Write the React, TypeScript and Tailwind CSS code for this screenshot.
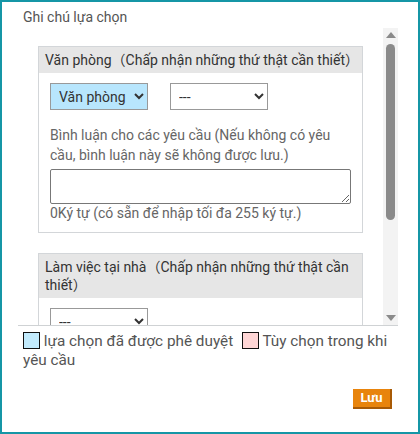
import React from "react";

const comment =
  "Bình luận cho các yêu cầu (Nếu không có yêu cầu, bình luận này sẽ không được lưu.)";

function Card({ title, second }: { title: string; second?: boolean }) {
  return (
    <div className="border border-[#d3d6d9] bg-white">
      <div className="bg-[#e6e6e6] px-[6px] py-[4px] text-[14px] leading-[18px] text-[#333]">{title}</div>
      <div className="px-[11px] pt-[10px] pb-[10px]">
        <div className="flex gap-[22px]">
          <select
            defaultValue={second ? "---" : "office"}
            className={
              "w-[98px] h-[27px] border border-[#999] px-[4px] text-[14px] text-[#333] " +
              (second ? "bg-white" : "bg-[#b8e6fd]")
            }
          >
            <option value="office">Văn phòng</option>
            <option value="---">---</option>
          </select>
          {!second && (
            <select defaultValue="---" className="w-[98px] h-[27px] border border-[#999] bg-white px-[4px] text-[14px] text-[#333]">
              <option value="---">---</option>
            </select>
          )}
        </div>
        <p className="mt-[15px] w-[285px] text-[14px] leading-[20px] text-[#666]">{comment}</p>
        <textarea className="mt-[4px] block w-[301px] h-[35px] border border-[#777] rounded-[2px]" />
        <div className="text-[14px] leading-[18px] text-[#666]">0Ký tự (có sẵn để nhập tối đa 255 ký tự.)</div>
      </div>
    </div>
  );
}

// thanh cuộn vẽ tay (ảnh chụp headless không hiện thanh cuộn thật)
function ScrollBar() {
  return (
    <div className="w-[15px] shrink-0 bg-[#f3f3f3] flex flex-col items-center">
      <div className="h-[15px] flex items-start pt-[4px]">
        <svg width="10" height="6" viewBox="0 0 10 6"><path d="M0 6 L5 0 L10 6 Z" fill="#8a8a8a" /></svg>
      </div>
      <div className="mt-[1px] w-[9px] h-[176px] rounded-full bg-[#8a8a8a]" />
      <div className="flex-1" />
      <div className="h-[15px] flex items-start pt-[5px]">
        <svg width="10" height="6" viewBox="0 0 10 6"><path d="M0 0 L10 0 L5 6 Z" fill="#8a8a8a" /></svg>
      </div>
    </div>
  );
}

export default function App() {
  return (
    <div className="w-[420px] h-[434px] border-2 border-[#1596a6] bg-white flex flex-col font-['Roboto','Noto_Sans_CJK_JP',sans-serif]">
      <div className="pl-[21px] pt-[5px] h-[26px] text-[14px] leading-[20px] text-[#555]">Ghi chú lựa chọn</div>

      {/* vùng cuộn */}
      <div className="ml-[16px] w-[380px] h-[298px] shrink-0 border-b border-[#cfd2d4] flex">
        <div className="flex-1 overflow-hidden">
          <div className="px-[20px] pt-[18px] pb-[18px] flex flex-col gap-[20px]">
            <Card title="Văn phòng（Chấp nhận những thứ thật cần thiết）" />
            <Card title="Làm việc tại nhà（Chấp nhận những thứ thật cần thiết）" second />
          </div>
        </div>
        <ScrollBar />
      </div>

      {/* chú thích */}
      <div className="pl-[21px] pr-[20px] pt-[6px] text-[15.3px] leading-[19px] text-[#555]">
        <span className="inline-block w-[17px] h-[17px] border border-[#111] bg-[#c2ebfd] align-[-3px]" />{" "}
        lựa chọn đã được phê duyệt{" "}
        <span className="ml-[5px] inline-block w-[17px] h-[17px] border border-[#111] bg-[#ffd6d6] align-[-3px]" />{" "}
        Tùy chọn trong khi yêu cầu
      </div>

      <div className="flex justify-end pr-[26px] mt-[19px]">
        <button className="w-[39px] h-[20px] bg-[#e8840c] border-r-2 border-b-2 border-[#a85a05] text-white text-[13px] font-bold leading-[18px]">
          Lưu
        </button>
      </div>
    </div>
  );
}
